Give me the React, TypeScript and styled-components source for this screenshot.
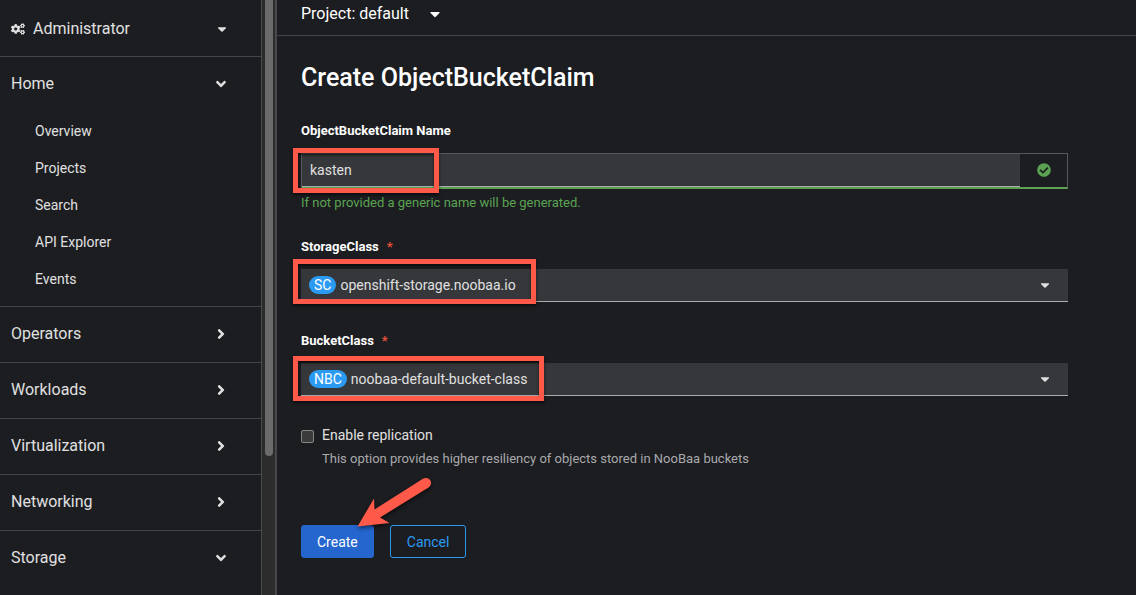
import React from 'react';
import styled, { createGlobalStyle } from 'styled-components';
import { FaAngleDown, FaAngleRight, FaCaretDown, FaCheckCircle, FaCogs } from 'react-icons/fa';

const color = {
  page: '#1c1d21',
  field: '#36373a',
  line: '#444548',
  text: '#e0e0e0',
  bright: '#ffffff',
  muted: '#a8a9ab',
  green: '#5ba352',
  blue: '#2b9af3',
  primary: '#2466ce',
  mark: '#ff5a49',
};

const GlobalStyle = createGlobalStyle`
  *, *::before, *::after { box-sizing: border-box; }
  body {
    margin: 0;
    background: ${color.page};
    color: ${color.text};
    font-family: Roboto, "Liberation Sans", sans-serif;
    font-size: 14px;
    line-height: 20px;
  }
  button, input, select { font: inherit; color: inherit; }
`;

const Page = styled.div`
  display: flex;
  min-height: 100vh;
`;

const Sidebar = styled.nav`
  flex: 0 0 261px;
`;

const NavRow = styled.button<{ $tall?: boolean }>`
  display: flex;
  align-items: center;
  gap: 8px;
  width: 100%;
  height: ${(p) => (p.$tall ? 56 : 55)}px;
  padding: ${(p) => (p.$tall ? '2px 33px 0 11px' : '0 34px 1px 11px')};
  border: 0;
  background: none;
  font-size: 16px;
  line-height: 24px;
  text-align: left;
  cursor: pointer;
`;

const NavLabel = styled.span`
  flex: 1;
`;

const NavArrow = styled.span`
  display: flex;
  justify-content: center;
  width: 12px;
  font-size: 16px;
`;

const NavSection = styled.div`
  border-bottom: 1px solid ${color.line};
  &:last-child { border-bottom: 0; }
`;

const SubList = styled.ul`
  margin: 0;
  padding: 0 0 9px;
  list-style: none;
`;

const SubLink = styled.a`
  display: flex;
  align-items: center;
  height: 37px;
  padding-left: 35px;
  color: inherit;
  text-decoration: none;
`;

const ScrollTrack = styled.div`
  flex: 0 0 15px;
  padding: 0 2px 0 3px;
  border: solid #4b4b4d;
  border-width: 0 1px;
  background: #2c2c2c;
`;

const ScrollThumb = styled.div`
  width: 8px;
  height: 456px;
  border-radius: 0 0 4px 4px;
  background: #6b6b6b;
`;

const Main = styled.main`
  flex: 1;
  min-width: 0;
  border-left: 1px solid ${color.line};
`;

const ProjectBar = styled.div`
  padding: 2px 24px 9px;
  border-bottom: 1px solid ${color.line};
`;

const ProjectButton = styled.button`
  display: flex;
  align-items: center;
  gap: 18px;
  padding: 0;
  border: 0;
  background: none;
  color: ${color.bright};
  font-size: 16px;
  line-height: 24px;
  cursor: pointer;
`;

const Form = styled.form`
  padding: 26px 68px 36px 24px;
`;

const Title = styled.h1`
  margin: 0 0 27px;
  color: ${color.bright};
  font-size: 25px;
  font-weight: 500;
  line-height: 32px;
`;

const Field = styled.div<{ $gap: number }>`
  margin-bottom: ${(p) => p.$gap}px;
`;

const Label = styled.label`
  display: block;
  margin-bottom: 12px;
  color: ${color.bright};
  font-size: 13px;
  font-weight: 700;
  line-height: 20px;
`;

const Required = styled.span`
  margin-left: 8px;
  color: #e8503f;
`;

const Control = styled.div`
  position: relative;
`;

const InputGroup = styled.div`
  display: flex;
  height: 36px;
  border: 1px solid #57585b;
  border-bottom: 2px solid ${color.green};
`;

const TextInput = styled.input`
  flex: 1;
  min-width: 0;
  padding: 0 8px;
  border: 0;
  border-bottom: 1px solid #aaabac;
  border-radius: 0;
  background: ${color.field};
  outline: none;
`;

const InputStatus = styled.span`
  display: flex;
  align-items: center;
  justify-content: center;
  width: 47px;
  padding-bottom: 1px;
  color: ${color.green};
`;

const Help = styled.p`
  margin: 4px 0 0;
  color: ${color.green};
  font-size: 13px;
`;

const SelectBox = styled.div`
  display: flex;
  align-items: center;
  height: 33px;
  padding-left: 8px;
  border-bottom: 1px solid #aaabac;
  background: ${color.field};
`;

const Badge = styled.span`
  padding: 0 5px;
  border-radius: 9px;
  background: ${color.blue};
  color: ${color.bright};
  line-height: 18px;
`;

const Select = styled.select`
  flex: 1;
  height: 32px;
  padding: 0 32px 0 4px;
  border: 0;
  background: none;
  appearance: none;
  outline: none;
`;

const SelectCaret = styled(FaCaretDown)`
  position: absolute;
  top: 9px;
  right: 16px;
  pointer-events: none;
`;

const Highlight = styled.span<{ $width: number; $top: number }>`
  position: absolute;
  top: ${(p) => p.$top}px;
  left: -8px;
  width: ${(p) => p.$width}px;
  height: 45px;
  border: 5px solid ${color.mark};
  box-shadow: 0 2px 3px rgba(0, 0, 0, 0.6), inset 0 2px 3px rgba(0, 0, 0, 0.6);
  pointer-events: none;
`;

const CheckRow = styled.div`
  display: flex;
  gap: 8px;
`;

const Checkbox = styled.input`
  flex: none;
  width: 13px;
  height: 13px;
  margin: 5px 0 0;
  border: 1px solid #858585;
  border-radius: 2px;
  background: #3b3b3b;
  appearance: none;
`;

const CheckHint = styled.p`
  margin: 4px 0 0;
  color: ${color.muted};
  font-size: 13px;
`;

const Actions = styled.div`
  position: relative;
  display: flex;
  gap: 16px;
  margin-top: 56px;
`;

const Button = styled.button<{ $primary?: boolean }>`
  height: 33px;
  padding: 0 ${(p) => (p.$primary ? 15 : 16)}px;
  border: 1px solid ${(p) => (p.$primary ? color.primary : color.blue)};
  border-radius: 3px;
  background: ${(p) => (p.$primary ? color.primary : 'transparent')};
  color: ${(p) => (p.$primary ? color.bright : color.blue)};
  cursor: pointer;
`;

const Arrow = styled.svg`
  position: absolute;
  top: -55px;
  left: 48px;
  filter: drop-shadow(0 2px 2px rgba(0, 0, 0, 0.6));
  pointer-events: none;
`;

const homeLinks = ['Overview', 'Projects', 'Search', 'API Explorer', 'Events'];

const sections = [
  { name: 'Home', open: true, links: homeLinks },
  { name: 'Operators' },
  { name: 'Workloads' },
  { name: 'Virtualization' },
  { name: 'Networking' },
  { name: 'Storage', open: true },
];

const selects = [
  { id: 'storage-class', label: 'StorageClass', badge: 'SC', value: 'openshift-storage.noobaa.io', width: 243, top: -10 },
  { id: 'bucket-class', label: 'BucketClass', badge: 'NBC', value: 'noobaa-default-bucket-class', width: 251, top: -7 },
];

export default function App() {
  return (
    <>
      <GlobalStyle />
      <Page>
        <Sidebar aria-label="Main">
          <NavSection>
            <NavRow type="button" $tall>
              <FaCogs size={14} />
              <NavLabel>Administrator</NavLabel>
              <NavArrow><FaCaretDown size={14} /></NavArrow>
            </NavRow>
          </NavSection>
          {sections.map((section) => (
            <NavSection key={section.name}>
              <NavRow type="button" aria-expanded={!!section.open}>
                <NavLabel>{section.name}</NavLabel>
                <NavArrow>{section.open ? <FaAngleDown /> : <FaAngleRight />}</NavArrow>
              </NavRow>
              {section.links && (
                <SubList>
                  {section.links.map((link) => (
                    <li key={link}><SubLink href="#">{link}</SubLink></li>
                  ))}
                </SubList>
              )}
            </NavSection>
          ))}
        </Sidebar>
        <ScrollTrack aria-hidden="true"><ScrollThumb /></ScrollTrack>
        <Main>
          <ProjectBar>
            <ProjectButton type="button">
              Project: default
              <FaCaretDown />
            </ProjectButton>
          </ProjectBar>
          <Form onSubmit={(e: React.FormEvent) => e.preventDefault()}>
            <Title>Create ObjectBucketClaim</Title>
            <Field $gap={24}>
              <Label htmlFor="obc-name">ObjectBucketClaim Name</Label>
              <Control>
                <InputGroup>
                  <TextInput id="obc-name" type="text" defaultValue="kasten" aria-describedby="obc-help" />
                  <InputStatus><FaCheckCircle size={14} /></InputStatus>
                </InputGroup>
                <Highlight $width={146} $top={-5} />
              </Control>
              <Help id="obc-help">If not provided a generic name will be generated.</Help>
            </Field>
            {selects.map((s) => (
              <Field key={s.id} $gap={29}>
                <Label htmlFor={s.id}>
                  {s.label}
                  <Required aria-hidden="true">*</Required>
                </Label>
                <Control>
                  <SelectBox>
                    <Badge>{s.badge}</Badge>
                    <Select id={s.id} required defaultValue={s.value}>
                      <option>{s.value}</option>
                    </Select>
                    <SelectCaret size={14} />
                  </SelectBox>
                  <Highlight $width={s.width} $top={s.top} />
                </Control>
              </Field>
            ))}
            <CheckRow>
              <Checkbox id="replication" type="checkbox" aria-describedby="replication-hint" />
              <div>
                <label htmlFor="replication">Enable replication</label>
                <CheckHint id="replication-hint">
                  This option provides higher resiliency of objects stored in NooBaa buckets
                </CheckHint>
              </div>
            </CheckRow>
            <Actions>
              <Button type="submit" $primary>Create</Button>
              <Button type="button">Cancel</Button>
              <Arrow width="90" height="64" viewBox="0 0 90 64" aria-hidden="true">
                <path
                  d="M8.500 56.500 L25 28.500 L25.500 39.500 L73.500 9 C80 5.500 85.500 13 79.500 17.500 L31 47.500 L40.500 53 Z"
                  fill={color.mark}
                />
              </Arrow>
            </Actions>
          </Form>
        </Main>
      </Page>
    </>
  );
}
